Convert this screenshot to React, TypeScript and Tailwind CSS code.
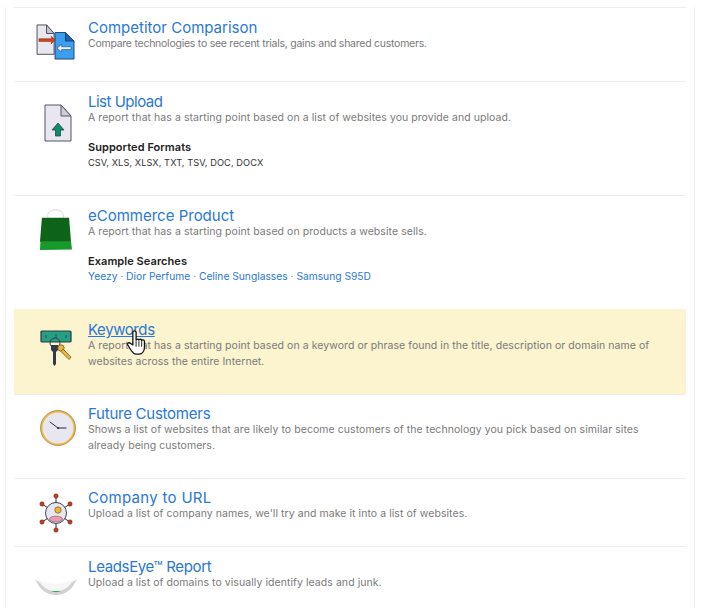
import React from 'react';

const CompareIcon = () => (
  <svg viewBox="0 0 42 38" className="w-[40px] h-[36px]">
    <path d="M1 1h10l8 9v22H1z" fill="#e8e6ef" stroke="#4a4a5c" strokeWidth="1" />
    <path d="M11 1v9h8z" fill="#c9c7d2" stroke="#4a4a5c" strokeWidth="1" />
    <path d="M3 15.500h13v-2.500l4 4-4 4v-2.500H3z" fill="#d2401c" stroke="#8a3a20" strokeWidth="0.6" />
    <path d="M20 9h11l9 9v19H20z" fill="#3aa0ee" stroke="#23406e" strokeWidth="1" />
    <path d="M31 9v9h9z" fill="#1d5fc0" stroke="#23406e" strokeWidth="1" />
    <path d="M37 24h-10v-2.500l-5 4 5 4V27h10z" fill="#e8eef8" stroke="#23406e" strokeWidth="0.6" />
  </svg>
);

const UploadIcon = () => (
  <svg viewBox="0 0 28 38" className="w-[28px] h-[38px]">
    <path d="M1 1h16l10 11v25H1z" fill="#e8e6ef" stroke="#55556a" strokeWidth="1" />
    <path d="M17 1v11h10z" fill="#cfcdd8" stroke="#55556a" strokeWidth="1" />
    <path d="M14 19l6 7h-3.500v6h-5v-6H8z" fill="#0f8a6a" stroke="#1f4a44" strokeWidth="0.8" />
  </svg>
);

const BagIcon = () => (
  <svg viewBox="0 0 34 42" className="w-[33px] h-[41px]">
    <path d="M9 11V6c0-7 16-7 16 0v5" fill="none" stroke="#d9d9d9" strokeWidth="1" />
    <path d="M3 9h28l2 25H1z" fill="#0d6317" />
    <path d="M1.500 33h31.500l1 8.500-33 .5z" fill="#179a2c" />
  </svg>
);

const KeysIcon = () => (
  <svg viewBox="0 0 32 36" className="w-[32px] h-[36px]">
    <rect x="1" y="1" width="30" height="11" rx="1" fill="#25a083" stroke="#2a3a44" strokeWidth="1.200" />
    <path d="M6 5v3M16 4v4M26 5v3" stroke="#2a3a44" strokeWidth="0.800" />
    <circle cx="15" cy="13" r="5" fill="none" stroke="#33404c" strokeWidth="1" />
    <path d="M11 15h7v5l-2 2v12l-1.500 2-1.500-2V22l-2-2z" fill="#33384a" />
    <circle cx="21" cy="18" r="3.200" fill="#f0b53a" stroke="#6a5a2a" strokeWidth="0.800" />
    <path d="M23 19l8 8-2 2.500-8-8z" fill="#f0b53a" stroke="#6a5a2a" strokeWidth="0.800" />
  </svg>
);

const ClockIcon = () => (
  <svg viewBox="0 0 36 36" className="w-[36px] h-[36px]">
    <circle cx="18" cy="18" r="16.500" fill="#e8e6ef" stroke="#f2bb3a" strokeWidth="2" />
    <circle cx="18" cy="18" r="17.500" fill="none" stroke="#5a5040" strokeWidth="0.500" />
    <path d="M18 18L10 12M18 18h8" stroke="#2a2a3a" strokeWidth="1" strokeLinecap="round" />
    <circle cx="18" cy="18" r="1" fill="#2a2a3a" />
  </svg>
);

const NodesIcon = () => (
  <svg viewBox="0 0 36 40" className="w-[36px] h-[40px]">
    <path d="M18 3v34M4 11l28 18M32 11L4 29" stroke="#33333f" strokeWidth="1" />
    <circle cx="18" cy="20" r="10.500" fill="#e8e6ef" stroke="#44445a" strokeWidth="1" />
    <circle cx="20" cy="17" r="3.200" fill="#f2b52e" stroke="#5a4a2a" strokeWidth="0.600" />
    <ellipse cx="18" cy="26" rx="6.500" ry="2.800" fill="#f09ab0" stroke="#44445a" strokeWidth="0.500" />
    {[[18, 3], [32, 11], [32, 29], [18, 37], [4, 29], [4, 11]].map(([x, y]) => (
      <circle key={`${x}-${y}`} cx={x} cy={y} r="2.200" fill="#c4401c" stroke="#5a2a1a" strokeWidth="0.500" />
    ))}
  </svg>
);

const EyeIcon = () => (
  <svg viewBox="0 0 42 20" className="w-[42px] h-[20px]">
    <path d="M0 1c8 8 32 8 42 0-5 11-12 16-21 16S5 12 0 1z" fill="#d2d2d2" />
    <path d="M3 1c8 6 28 6 36 0-5 9-11 12-18 12S7 10 3 1z" fill="#f6f6f6" />
    <path d="M16 13h10c-3 1.500-7 1.500-10 0z" fill="#22b14c" />
  </svg>
);

// hover pointer over the Keywords row
const HandCursor = () => (
  <svg viewBox="0 0 22 28" className="absolute left-[113px] top-[21px] w-[21px] h-[26px]">
    <path
      d="M6 2.500c0-2 3.500-2 3.500 0V11c0-1.500 3-1.500 3 0 0-1.500 3-1.500 3 .5 0-1.500 3-1 3 .5v6c0 4-2 8-6 8h-3c-3 0-4-2-6-5l-3-5c-1-2 1.500-3 3-1.500L6 16z"
      fill="#fff"
      stroke="#111"
      strokeWidth="1.400"
      strokeLinejoin="round"
    />
    <path d="M9.500 12v6M12.500 12v6M15.500 12v6" stroke="#111" strokeWidth="1" />
  </svg>
);

interface RowProps {
  icon: React.ReactNode;
  title: string;
  children: React.ReactNode;
  className?: string;
  iconClass?: string;
  titleClass?: string;
}

const Row: React.FC<RowProps> = ({ icon, title, children, className = '', iconClass = '', titleClass = '' }) => (
  <div className={`relative flex mx-[8px] pl-[17px] border-t border-[#ececec] ${className}`}>
    <div className={`w-[49px] mr-[8px] flex justify-center shrink-0 ${iconClass}`}>{icon}</div>
    <div className="min-w-0 max-w-[575px]">
      <div className={`text-[15px] leading-[17px] text-[#2a78d6] ${titleClass}`}>{title}</div>
      <div className="text-[10.5px] leading-[16px] text-[#7a7a7a] tracking-[0.06px]">{children}</div>
    </div>
  </div>
);

export default function App() {
  return (
    <div className="h-[608px] w-[703px] bg-white overflow-hidden pt-[7px] font-['Inter',sans-serif]">
      <div className="ml-[5px] w-[690px] h-[601px] border-x border-[#efefef] overflow-hidden">
        <Row icon={<CompareIcon />} title="Competitor Comparison" className="h-[74px] pt-[11px]" iconClass="pt-[5px]">
          <span className="tracking-[-0.25px]">Compare technologies to see recent trials, gains and shared customers.</span>
        </Row>

        <Row
          icon={<UploadIcon />}
          title="List Upload"
          className="h-[114px] pt-[11px]"
          iconClass="pt-[11px] pl-[4px]"
          titleClass="tracking-[-0.5px]"
        >
          <div>A report that has a starting point based on a list of websites you provide and upload.</div>
          <div className="mt-[13px] text-[11px] font-semibold text-[#222]">Supported Formats</div>
          <div className="text-[9.25px] text-[#333] leading-[15px]">CSV, XLS, XLSX, TXT, TSV, DOC, DOCX</div>
        </Row>

        <Row icon={<BagIcon />} title="eCommerce Product" className="h-[114px] pt-[11px]" iconClass="pt-[2px]">
          <div>A report that has a starting point based on products a website sells.</div>
          <div className="mt-[13px] text-[11px] font-semibold text-[#222]">Example Searches</div>
          <div className="text-[10.25px] text-[#2a78d6] leading-[15px] tracking-normal">Yeezy · Dior Perfume · Celine Sunglasses · Samsung S95D</div>
        </Row>

        <Row
          icon={<KeysIcon />}
          title="Keywords"
          className="h-[85px] pt-[12px] bg-[#fcf3cf] border-t-0"
          iconClass="pt-[9px]"
          titleClass="underline text-[#1f6fc0] tracking-[-0.4px]"
        >
          A report that has a starting point based on a keyword or phrase found in the title, description or domain name of websites across the entire Internet.
          <HandCursor />
        </Row>

        <Row
          icon={<ClockIcon />}
          title="Future Customers"
          className="h-[84px] pt-[10px]"
          iconClass="pt-[5px] pl-[5px]"
          titleClass="tracking-[-0.25px]"
        >
          Shows a list of websites that are likely to become customers of the technology you pick based on similar sites already being customers.
        </Row>

        <Row
          icon={<NodesIcon />}
          title="Company to URL"
          className="h-[68px] pt-[10px]"
          iconClass="pt-[4px]"
          titleClass="tracking-[0.3px]"
        >
          Upload a list of company names, we'll try and make it into a list of websites.
        </Row>

        <Row
          icon={<EyeIcon />}
          title="LeadsEye™ Report"
          className="h-[62px] pt-[11px]"
          iconClass="pt-[20px]"
          titleClass="tracking-[-0.35px]"
        >
          Upload a list of domains to visually identify leads and junk.
        </Row>
      </div>
    </div>
  );
}
